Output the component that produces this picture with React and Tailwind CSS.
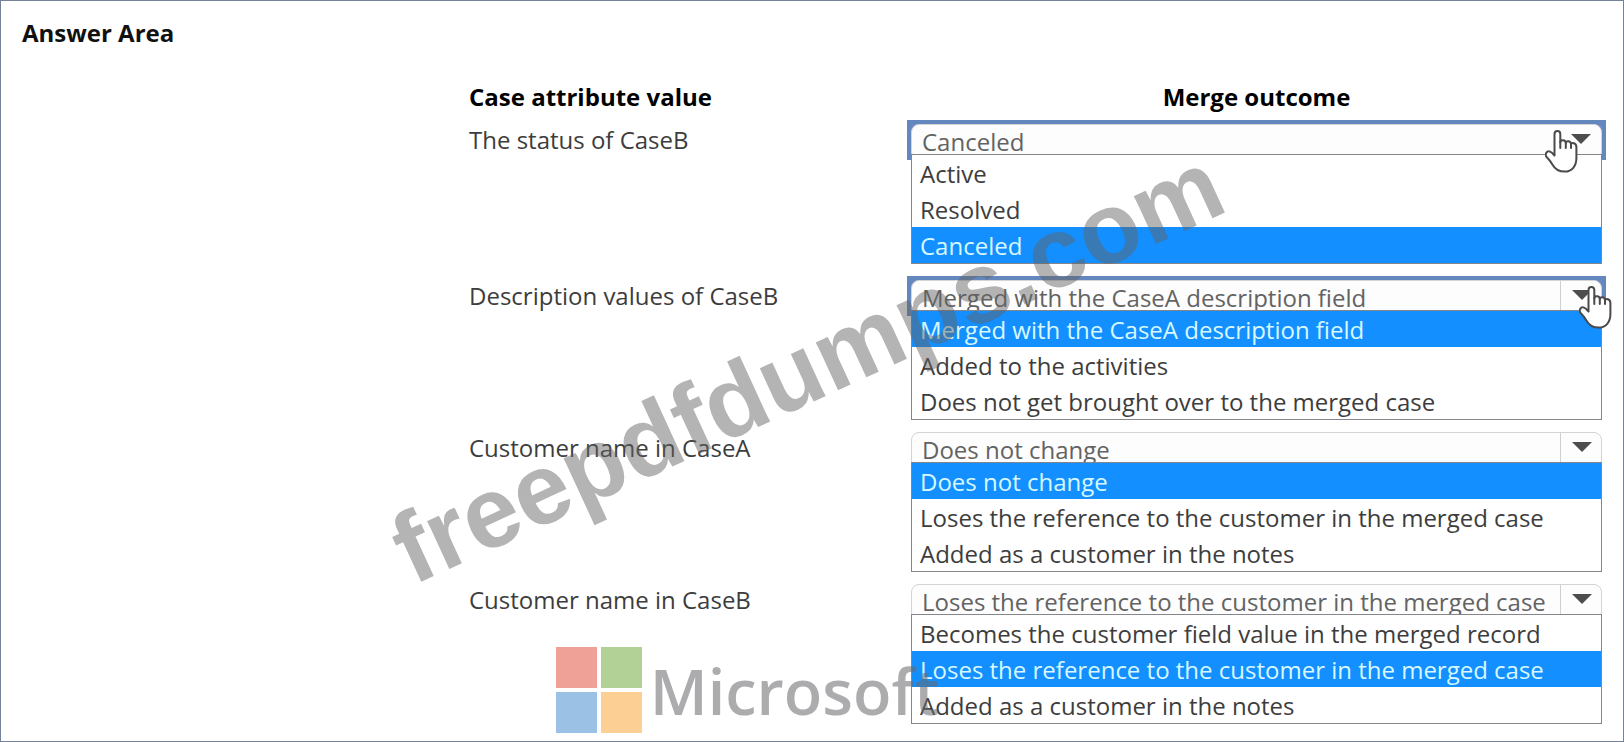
import React, { useState } from "react";

const questions = [
  {
    id: "status-case-b",
    label: "The status of CaseB",
    options: ["Active", "Resolved", "Canceled"],
    answer: "Canceled",
    focused: true,
    pointer: "left",
  },
  {
    id: "description-case-b",
    label: "Description values of CaseB",
    options: [
      "Merged with the CaseA description field",
      "Added to the activities",
      "Does not get brought over to the merged case",
    ],
    answer: "Merged with the CaseA description field",
    focused: true,
    pointer: "right",
  },
  {
    id: "customer-case-a",
    label: "Customer name in CaseA",
    options: [
      "Does not change",
      "Loses the reference to the customer in the merged case",
      "Added as a customer in the notes",
    ],
    answer: "Does not change",
  },
  {
    id: "customer-case-b",
    label: "Customer name in CaseB",
    options: [
      "Becomes the customer field value in the merged record",
      "Loses the reference to the customer in the merged case",
      "Added as a customer in the notes",
    ],
    answer: "Loses the reference to the customer in the merged case",
  },
];

const HandPointer = ({ side }) => (
  <svg
    viewBox="0 0 33 43"
    className={`pointer-events-none absolute top-2.5 z-20 h-[43px] w-[33px] ${side === "left" ? "right-6" : "-right-2.5"}`}
    aria-hidden="true"
  >
    <path
      d="M9.5 25.5V4.2C9.5 0 15.3 0 15.3 4.2V12.5C15.6 9.4 20.6 9.6 20.8 13C21.4 10.4 25.8 10.8 26 14.2C26.8 12.2 31.4 12.8 31.4 17.2V28C31.4 36 27 41.6 19.8 41.6C13 41.6 9.6 38.4 7.4 34.4C5.6 31.2 4.2 29.6 1.6 27C-0.6 24.4 1.8 20.4 5 21.6C7 22.4 8.2 24 9.5 25.5Z"
      fill="white"
      stroke="#4a4a4a"
      strokeWidth="2"
      strokeLinejoin="round"
    />
    <path
      d="M15.3 12V18M20.8 13V18M26 14V18"
      fill="none"
      stroke="#4a4a4a"
      strokeWidth="2"
      strokeLinecap="round"
    />
  </svg>
);

const AnswerField = ({ question, value, onChange }) => {
  const { id, options, focused, pointer } = question;

  return (
    <div className={`relative ${focused ? "pt-1" : ""}`}>
      {/* The open list hides the lower edge of the box */}
      <div className={`relative h-8 ${focused ? "bg-[#6d87c0] outline-4 outline-[#6487bd]" : ""}`}>
        <select
          id={id}
          value={value}
          onChange={(e) => onChange(e.target.value)}
          className="block h-9 w-full appearance-none rounded-lg border border-[#d4d4d4] bg-[#fdfdfd] pl-2.5 text-2xl leading-8 text-[#636363] outline-none"
        >
          {options.map((option) => (
            <option key={option} value={option}>
              {option}
            </option>
          ))}
        </select>
        <div
          className={`pointer-events-none absolute inset-y-0 right-0 flex w-[42px] justify-center pt-2.5 ${
            pointer === "left" ? "" : "border-l border-[#d0d0d0]"
          }`}
        >
          <svg viewBox="0 0 20 10" className="h-2.5 w-5" aria-hidden="true">
            <path d="M0 0H20L10 10Z" fill="#4d4d4f" />
          </svg>
        </div>
      </div>
      {pointer && <HandPointer side={pointer} />}

      <ul role="listbox" aria-label={question.label} className="relative z-10 -mt-0.5 border border-[#85858c] bg-white">
        {options.map((option) => (
          <li
            key={option}
            role="option"
            aria-selected={option === value}
            onClick={() => onChange(option)}
            className={`h-9 pl-2 text-2xl leading-[38px] whitespace-nowrap ${
              option === value ? "bg-[#148fff] font-medium text-[#d6f9ff]" : "text-[#3d3d3d]"
            }`}
          >
            {option}
          </li>
        ))}
      </ul>
    </div>
  );
};

const MicrosoftLogo = () => (
  <div className="pointer-events-none absolute bottom-2 left-[34.2%] z-30 flex items-center gap-2 opacity-55">
    <svg viewBox="0 0 86 86" className="size-[86px]" aria-hidden="true">
      <rect width="41" height="41" fill="#e25544" />
      <rect x="45" width="41" height="41" fill="#75ad43" />
      <rect y="45" width="41" height="41" fill="#4a90d0" />
      <rect x="45" y="45" width="41" height="41" fill="#faaa40" />
    </svg>
    <span className="text-[63px] leading-none font-semibold text-[#69696d]">Microsoft</span>
  </div>
);

const App = () => {
  const [answers, setAnswers] = useState(
    Object.fromEntries(questions.map((q) => [q.id, q.answer]))
  );

  const handleChange = (id, value) => {
    setAnswers((prev) => ({ ...prev, [id]: value }));
  };

  return (
    <main className="relative min-h-screen overflow-hidden border border-[#75839a] bg-white px-[21px] pt-4 font-['Open_Sans','Noto_Sans',sans-serif]">
      <h1 className="text-2xl leading-8 font-bold text-[#111]">Answer Area</h1>

      <div className="mt-8 grid grid-cols-[447fr_442fr_691fr] text-2xl leading-8 font-bold text-black">
        <h2 className="col-start-2">Case attribute value</h2>
        <h2 className="text-center">Merge outcome</h2>
      </div>

      <div className="mt-[7px] flex flex-col gap-3">
        {questions.map((question) => (
          <div key={question.id} className="grid grid-cols-[447fr_442fr_691fr]">
            <label
              htmlFor={question.id}
              className={`col-start-2 text-2xl leading-8 text-[#3d3d3d] ${question.focused ? "pt-1" : ""}`}
            >
              {question.label}
            </label>
            <AnswerField
              question={question}
              value={answers[question.id]}
              onChange={(value) => handleChange(question.id, value)}
            />
          </div>
        ))}
      </div>

      <MicrosoftLogo />

      <div className="pointer-events-none absolute inset-0 z-40 flex items-center justify-center pr-2.5 pb-2.5">
        <span className="-rotate-[24.7deg] font-['Liberation_Sans',Arial,sans-serif] text-[100px] leading-none font-bold text-[#636363]/48">
          freepdfdumps.com
        </span>
      </div>
    </main>
  );
};

export default App;
